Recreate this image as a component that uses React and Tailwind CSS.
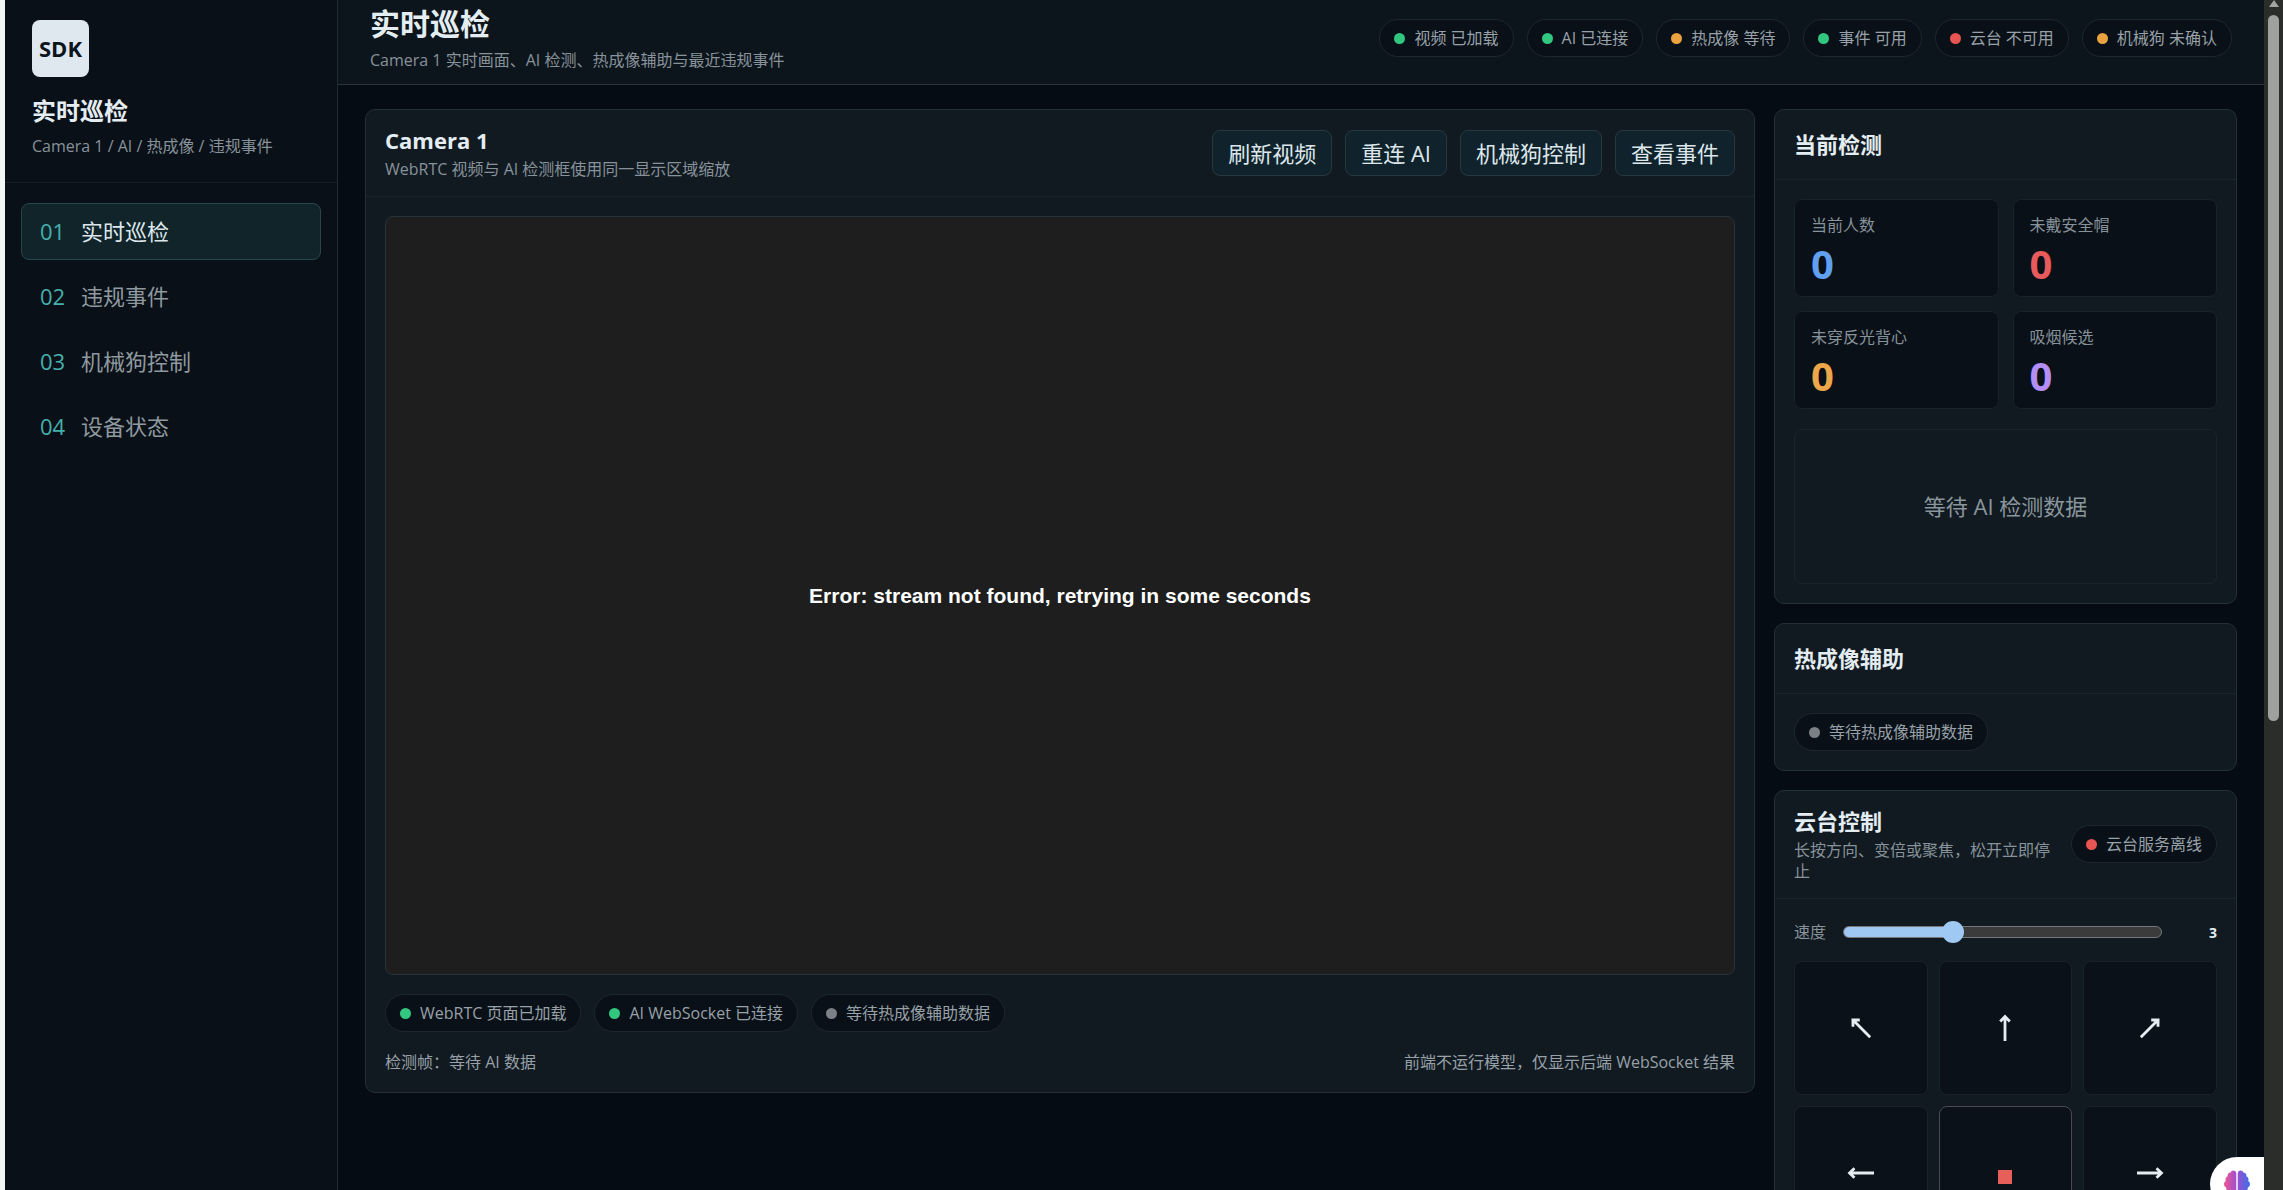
import React, { useState } from 'react';
import { FaBrain } from 'react-icons/fa';

const navItems = [
  { id: '01', label: '实时巡检' },
  { id: '02', label: '违规事件' },
  { id: '03', label: '机械狗控制' },
  { id: '04', label: '设备状态' },
];

const headerStatus = [
  { tone: 'green', text: '视频 已加载' },
  { tone: 'green', text: 'AI 已连接' },
  { tone: 'amber', text: '热成像 等待' },
  { tone: 'green', text: '事件 可用' },
  { tone: 'red', text: '云台 不可用' },
  { tone: 'amber', text: '机械狗 未确认' },
];

const videoStatus = [
  { tone: 'green', text: 'WebRTC 页面已加载' },
  { tone: 'green', text: 'AI WebSocket 已连接' },
  { tone: 'gray', text: '等待热成像辅助数据' },
];

const stats = [
  { label: '当前人数', value: 0, color: 'text-[#619ff0]' },
  { label: '未戴安全帽', value: 0, color: 'text-[#e95a5c]' },
  { label: '未穿反光背心', value: 0, color: 'text-[#eda649]' },
  { label: '吸烟候选', value: 0, color: 'text-[#b48df5]' },
];

const directions = [
  { name: '左上', angle: -45 },
  { name: '上', angle: 0 },
  { name: '右上', angle: 45 },
  { name: '左', angle: -90 },
  { name: '停止', stop: true },
  { name: '右', angle: 90 },
  { name: '左下', angle: -135 },
  { name: '下', angle: 180 },
  { name: '右下', angle: 135 },
];

const tones = {
  green: 'bg-[#32c77f]',
  amber: 'bg-[#eba33f]',
  red: 'bg-[#e75553]',
  gray: 'bg-[#7b8087]',
};

const Pill = ({ tone, text }) => (
  <span className="inline-flex h-[38px] shrink-0 items-center gap-[9px] rounded-full border border-[#1e272e] bg-[#091017] px-[14px] text-[16px] leading-[22px] whitespace-nowrap text-[#98a1a8]">
    <span className={`size-[11px] rounded-full ${tones[tone]}`} />
    {text}
  </span>
);

const Panel = ({ title, desc, actions, children }) => (
  <section className="rounded-[10px] border border-[#252f36] bg-[#111a21]">
    <div className="flex min-h-[70px] items-center justify-between gap-4 border-b border-[#1a242b] px-[19px] pt-[15px] pb-4">
      <div>
        <h2 className="text-[22px] leading-[30px] font-bold text-[#e4edf2]">{title}</h2>
        {desc && <p className="mt-1 text-[16px] leading-[21px] text-[#87929a]">{desc}</p>}
      </div>
      {actions}
    </div>
    <div className="p-[19px]">{children}</div>
  </section>
);

const Sidebar = () => (
  <aside className="w-[333px] shrink-0 border-r border-[#202a31] bg-[#091017]">
    <div className="border-b border-[#161e24] px-[27px] pt-5 pb-[25px]">
      <div className="flex size-[57px] items-center justify-center rounded-[8px] bg-[#dfe7ef] text-[22px] font-bold text-[#0c141c]">SDK</div>
      <h1 className="mt-[19px] text-[24px] leading-[30px] font-bold text-[#e4edf2]">实时巡检</h1>
      <p className="mt-[9px] text-[16px] leading-[22px] text-[#87929a]">Camera 1 / AI / 热成像 / 违规事件</p>
    </div>
    <nav className="flex flex-col gap-2 px-4 py-5">
      {navItems.map((item, i) => (
        <a
          key={item.id}
          href="#"
          className={`flex h-[57px] items-center rounded-[8px] border px-[18px] text-[22px] ${
            i === 0 ? 'border-[#28474c] bg-[#10242a] text-[#dde7eb]' : 'border-transparent text-[#8f999f]'
          }`}
        >
          <span className="w-[41px] text-[#45b0ac]">{item.id}</span>
          {item.label}
        </a>
      ))}
    </nav>
  </aside>
);

const Arrow = ({ angle }) => (
  <svg
    viewBox="0 0 28 28"
    className="size-7"
    fill="none"
    stroke="#e4edf2"
    strokeWidth="2.8"
    style={{ transform: `rotate(${angle}deg)` }}
  >
    <path d="M14 27V2M9.2 7.5L14 2.5L18.8 7.5" />
  </svg>
);

const PtzPanel = () => {
  const [speed, setSpeed] = useState(3);
  const min = 1;
  const max = 7;
  const fill = ((speed - min) / (max - min)) * 100;

  return (
    <Panel
      title="云台控制"
      desc="长按方向、变倍或聚焦，松开立即停止"
      actions={<Pill tone="red" text="云台服务离线" />}
    >
      <div className="flex h-7 items-center gap-[17px]">
        <label htmlFor="speed" className="text-[16px] leading-[22px] text-[#87929a]">速度</label>
        <input
          id="speed"
          type="range"
          min={min}
          max={max}
          value={speed}
          onChange={(e) => setSpeed(Number(e.target.value))}
          style={{ '--fill': `${fill}%` }}
          className="h-[22px] min-w-0 flex-1 appearance-none bg-transparent [&::-webkit-slider-runnable-track]:h-3 [&::-webkit-slider-runnable-track]:rounded-full [&::-webkit-slider-runnable-track]:border [&::-webkit-slider-runnable-track]:border-[#74777b] [&::-webkit-slider-runnable-track]:bg-[linear-gradient(to_right,#9fc8f3_var(--fill),#3b3b3b_var(--fill))] [&::-webkit-slider-thumb]:-mt-[6px] [&::-webkit-slider-thumb]:size-[22px] [&::-webkit-slider-thumb]:appearance-none [&::-webkit-slider-thumb]:rounded-full [&::-webkit-slider-thumb]:bg-[#9fc8f3]"
        />
        <output htmlFor="speed" className="w-[38px] text-right text-[14px] font-bold text-[#e4edf2]">{speed}</output>
      </div>
      <div className="mt-[15px] grid grid-cols-3 gap-[11px]">
        {directions.map((d) => (
          <button
            key={d.name}
            type="button"
            aria-label={d.name}
            className={`flex aspect-square items-center justify-center rounded-[8px] border bg-[#0a1118] ${
              d.stop ? 'border-[#4a4b52] pt-2' : 'border-[#1a232a]'
            }`}
          >
            {d.stop ? <span className="size-[14px] bg-[#e75f59]" /> : <Arrow angle={d.angle} />}
          </button>
        ))}
      </div>
    </Panel>
  );
};

export default function App() {
  return (
    <div className="flex h-screen overflow-hidden border-l-[5px] border-[#f4f6f5] bg-[#050c13] font-['Open_Sans','Noto_Sans_CJK_SC',sans-serif]">
      <Sidebar />

      <div className="flex min-w-0 flex-1 flex-col">
        {/* top bar */}
        <header className="flex h-[85px] shrink-0 items-start justify-between border-b border-[#2a343b] bg-[#0d151c] px-8">
          <div className="pt-[5px]">
            <h2 className="text-[30px] leading-[38px] font-bold text-[#e4edf2]">实时巡检</h2>
            <p className="mt-[6px] text-[16px] leading-[22px] text-[#87929a]">Camera 1 实时画面、AI 检测、热成像辅助与最近违规事件</p>
          </div>
          <div className="flex gap-[13px] pt-[19px]">
            {headerStatus.map((s) => <Pill key={s.text} {...s} />)}
          </div>
        </header>

        <main className="grid min-h-0 flex-1 grid-cols-[minmax(0,1fr)_463px] items-start gap-[19px] overflow-hidden px-[27px] py-6">
          <Panel
            title="Camera 1"
            desc="WebRTC 视频与 AI 检测框使用同一显示区域缩放"
            actions={
              <div className="flex gap-[13px]">
                {['刷新视频', '重连 AI', '机械狗控制', '查看事件'].map((label) => (
                  <button
                    key={label}
                    type="button"
                    className="h-[46px] rounded-[8px] border border-[#29383f] bg-[#10232c] px-[15px] text-[22px] leading-[30px] text-[#dde7eb]"
                  >
                    {label}
                  </button>
                ))}
              </div>
            }
          >
            <div className="flex aspect-video items-center justify-center rounded-[8px] border border-[#2a3338] bg-[#1e1e1e]">
              <p className="font-['Liberation_Sans',sans-serif] text-[21px] font-bold text-white">
                Error: stream not found, retrying in some seconds
              </p>
            </div>
            <div className="mt-[19px] flex gap-[13px]">
              {videoStatus.map((s) => <Pill key={s.text} {...s} />)}
            </div>
            <div className="mt-[19px] flex justify-between text-[16px] leading-[22px] text-[#98a1a8]">
              <span>检测帧：等待 AI 数据</span>
              <span>前端不运行模型，仅显示后端 WebSocket 结果</span>
            </div>
          </Panel>

          <div className="flex flex-col gap-[19px]">
            <Panel title="当前检测">
              <div className="grid grid-cols-2 gap-[14px]">
                {stats.map((s) => (
                  <div key={s.label} className="h-[98px] rounded-[8px] border border-[#18222a] bg-[#091017] px-4 pt-[14px]">
                    <div className="text-[16px] leading-[22px] text-[#87929a]">{s.label}</div>
                    <div className={`mt-[7px] text-[40px] leading-[42px] font-bold ${s.color}`}>{s.value}</div>
                  </div>
                ))}
              </div>
              <div className="mt-5 flex h-[155px] items-center justify-center rounded-[8px] border border-[#1a242b] text-[22px] text-[#8a959c]">
                等待 AI 检测数据
              </div>
            </Panel>

            <Panel title="热成像辅助">
              <div className="flex">
                <Pill tone="gray" text="等待热成像辅助数据" />
              </div>
            </Panel>

            <PtzPanel />
          </div>
        </main>
      </div>

      {/* scroll track */}
      <div className="flex w-[19px] shrink-0 flex-col items-center bg-[#2b2d2a]" aria-hidden="true">
        <svg viewBox="0 0 10 8" className="h-2 w-[10px] shrink-0" fill="#a2a4a2">
          <path d="M5 0L10 7H0Z" />
        </svg>
        <div className="mt-[7px] h-[59.3%] w-[11px] rounded-full bg-[#9fa19f]" />
      </div>

      {/* floating assistant */}
      <button
        type="button"
        aria-label="AI 助手"
        className="fixed right-[19px] bottom-[-21px] flex h-[54px] w-[54px] justify-center rounded-l-full bg-white pt-3"
      >
        <svg width="0" height="0" className="absolute">
          <linearGradient id="brain" x1="0" x2="1" y1="0" y2="0">
            <stop offset="0" stopColor="#f0568f" />
            <stop offset="0.5" stopColor="#9a4fd0" />
            <stop offset="1" stopColor="#3d6fe8" />
          </linearGradient>
        </svg>
        <FaBrain size={26} fill="url(#brain)" />
      </button>
    </div>
  );
}
